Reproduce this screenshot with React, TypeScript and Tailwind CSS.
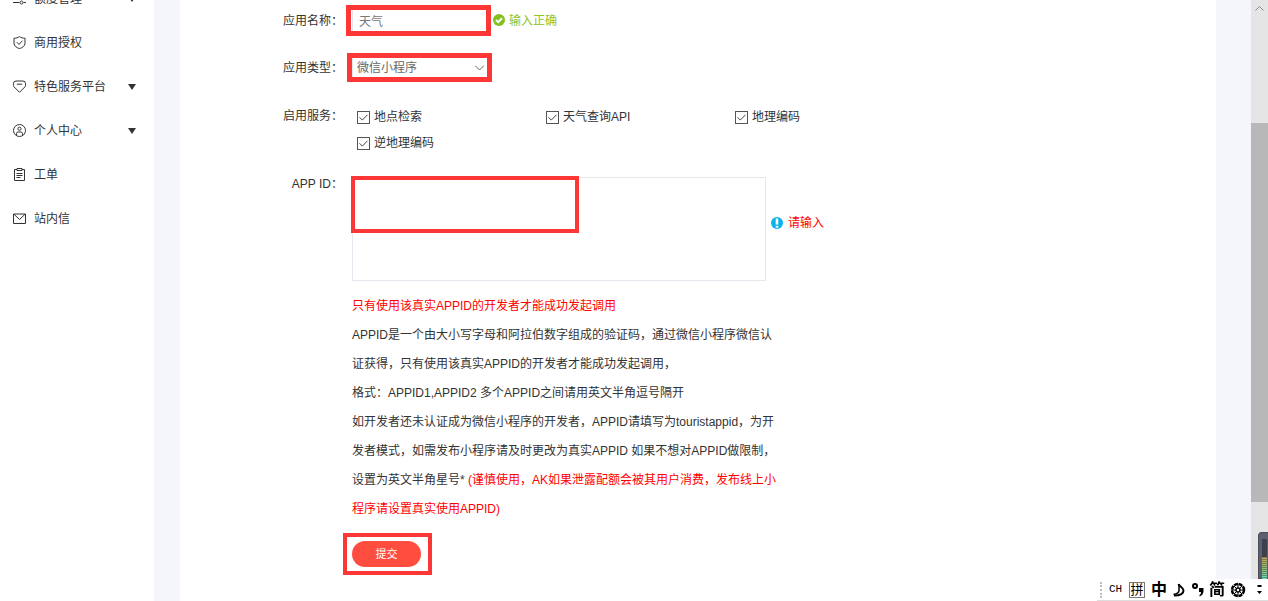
import { useState } from "react";

const services = ["地点检索", "天气查询API", "地理编码", "逆地理编码"];

const menu = [
  { name: "额度管理", icon: "quota", more: true },
  { name: "商用授权", icon: "shield", more: false },
  { name: "特色服务平台", icon: "gem", more: true },
  { name: "个人中心", icon: "user", more: true },
  { name: "工单", icon: "order", more: false },
  { name: "站内信", icon: "mail", more: false },
];

function MenuIcon({ name }: { name: string }) {
  return (
    <svg width="13" height="13" viewBox="0 0 13 13" fill="none" stroke="#333" strokeWidth="1">
      {name === "quota" && (
        <path d="M0 3h3M7 3h6M0 10.5h6.500M10.500 10.5h2.500M5 1.5a1.5 1.5 0 1 1 0 3a1.5 1.5 0 0 1 0-3zM8.500 9a1.5 1.5 0 1 1 0 3a1.5 1.5 0 0 1 0-3z" />
      )}
      {name === "shield" && (
        <path d="M6.5 .6C8 1.8 10 2.2 12 2.2v5C12 10 9.5 11.7 6.5 12.6C3.500 11.700 1 10 1 7.200v-5C3 2.200 5 1.800 6.500 .6zM3.800 6.200l2.200 2.200l3.500-3.700" />
      )}
      {name === "gem" && (
        <path d="M3 1h7a2.500 2.500 0 0 1 2.500 2.500v2c0 .6-.2 1-.6 1.400L6.500 12.300L1.100 6.900C.7 6.500.5 6.100.5 5.500v-2A2.500 2.500 0 0 1 3 1zM3.800 4.200h5.400" />
      )}
      {name === "user" && (
        <>
          <circle cx="6.5" cy="6.5" r="6" />
          <circle cx="6.5" cy="4.700" r="1.600" />
          <path d="M3.500 11.500V9.600a1.600 1.600 0 0 1 1.600-1.600h2.800a1.600 1.600 0 0 1 1.600 1.600v1.900" />
        </>
      )}
      {name === "order" && (
        <path d="M4 1.500H1.500v11h10v-11H9M4 .5h5v2H4zM3.500 5.500h6M3.500 7.500h6M3.500 9.500h4" />
      )}
      {name === "mail" && <path d="M.5 2h12v9.500H.5zM1 2.300l5.500 5.200L12 2.300" />}
    </svg>
  );
}

function Sidebar() {
  return (
    <nav className="w-[154px] shrink-0 bg-white">
      <ul className="-mt-6">
        {menu.map((item) => (
          <li key={item.name}>
            <a href="#" className="flex h-11 items-center pl-[13px] pr-[18px]">
              <MenuIcon name={item.icon} />
              <span className="ml-2 flex-1 pt-0.5">{item.name}</span>
              {item.more && (
                <svg width="8" height="8" viewBox="0 0 8 8" fill="#333">
                  <path d="M0 2h8L4 8z" />
                </svg>
              )}
            </a>
          </li>
        ))}
      </ul>
    </nav>
  );
}

function Scrollbar() {
  return (
    <div className="flex w-[17px] shrink-0 flex-col items-center bg-[#e5e5e5]">
      <svg width="9" height="17" viewBox="0 0 9 17" fill="none" stroke="#888">
        <path d="M.5 10.500l4-4l4 4" />
      </svg>
      <div className="grow-[106]" />
      <div className="w-full grow-[379] bg-[#b8b8b8]" />
      <div className="grow-[99]" />
    </div>
  );
}

function InputBar() {
  return (
    <div className="fixed right-0 bottom-0 flex h-[22px] w-[171px] items-center border-b border-[#ddd] bg-white pl-[3px] text-black">
      <div className="h-4 border-l-2 border-dotted border-[#bbb]" />
      <span className="ml-[7px] w-[14px] font-['Liberation_Mono'] text-[11px]">CH</span>
      <span className="ml-[6px] flex h-4 w-4 items-center justify-center border border-[#777] text-[13px]">拼</span>
      <span className="ml-[6px] text-[16px] font-bold">中</span>
      <svg className="ml-[5px]" width="14" height="16" viewBox="0 0 14 16" fill="none" stroke="#000" strokeWidth="2">
        <path d="M6.500 2C7 4 11.500 5.500 11.500 8.500C11.500 11.500 8 13.500 2 13.500" />
        <path d="M7 2v6.500C7 10.500 4.500 12 1.500 12.500" strokeWidth="1.500" />
      </svg>
      <svg className="ml-[5px]" width="14" height="16" viewBox="0 0 14 16">
        <circle cx="4" cy="4" r="2" fill="none" stroke="#000" strokeWidth="2" />
        <path d="M8 6h4.500v3c0 3-2 5-4 5.500v-1.500c1-.5 1.500-1.500 1.500-3H8z" />
      </svg>
      <span className="ml-[4px] text-[16px] font-bold">简</span>
      <svg className="ml-[5px]" width="16" height="16" viewBox="0 0 16 16" fill="none" stroke="#000">
        <circle cx="8" cy="8" r="6" strokeWidth="2.500" strokeDasharray="4 .7" />
        <circle cx="8" cy="8" r="2" strokeWidth="1.500" />
        <path d="M8 2v4M8 10v4M2 8h4M10 8h4M4 4l3 3M9 9l3 3M12 4L9 7M4 12l3-3" />
      </svg>
      <svg className="ml-[10px]" width="8" height="14" viewBox="0 0 8 14">
        <path d="M1.500 2h4v2h-4zM1 8h5l-2.500 3z" />
      </svg>
    </div>
  );
}

function VolumeMeter() {
  return (
    <div className="fixed right-0 bottom-[22px] h-[47px] w-[10px] rounded-tl border border-r-0 border-[#4a4d59] bg-[#5b5f6e] pt-[6px] pl-[3px]">
      <div className="h-[18px] w-[5px] bg-[#3e414c]" />
      <div className="h-[22px] w-[5px] bg-linear-to-b from-[#c9a94e] via-[#8fc06b] to-[#5fe0b0]">
        <svg width="5" height="22" viewBox="0 0 5 22" stroke="#3e414c" strokeOpacity=".5">
          <path d="M2.500 0v22" strokeWidth="5" strokeDasharray="1 1" />
        </svg>
      </div>
    </div>
  );
}

export default function App() {
  const [name, setName] = useState("天气");
  const [type, setType] = useState("mini");
  const [appId, setAppId] = useState("");

  return (
    <div className="flex h-screen overflow-hidden bg-[#f4f6fb] font-['Liberation_Sans','Noto_Sans_CJK_SC',sans-serif] text-[12px] text-[#333]">
      <Sidebar />

      <main className="mr-[35px] ml-[26px] flex-1 bg-white">
        <form
          className="flex flex-col gap-[21px] pt-[7px] whitespace-nowrap"
          onSubmit={(e) => e.preventDefault()}
        >
          <div className="flex items-center gap-[9px]">
            <label htmlFor="name" className="w-[163px] pt-0.5 text-right">应用名称：</label>
            <div className="relative">
              <input
                id="name"
                value={name}
                onChange={(e) => setName(e.target.value)}
                className="block h-[26px] w-[136px] border border-[#dfe6ec] px-1.5 text-[#777] outline-none"
              />
              <div className="pointer-events-none absolute -top-0.5 -right-[3px] -bottom-[3px] -left-1.5 border-5 border-[#fd3636]" />
            </div>
            <p className="-ml-1 flex items-center gap-1 text-[#8fc31f]">
              <svg width="12" height="12" viewBox="0 0 12 12">
                <circle cx="6" cy="6" r="6" fill="#84bf1d" />
                <path d="M3 6l2.200 2.200L9 4.300" fill="none" stroke="#fff" strokeWidth="2" />
              </svg>
              <span className="pt-0.5">输入正确</span>
            </p>
          </div>

          <div className="flex items-center gap-[9px]">
            <label htmlFor="type" className="w-[163px] pt-0.5 text-right">应用类型：</label>
            <div className="relative">
              <select
                id="type"
                value={type}
                onChange={(e) => setType(e.target.value)}
                className="block h-[26px] w-[136px] appearance-none border border-[#dfe6ec] bg-white px-1 pt-0.5 text-[#666] outline-none"
              >
                <option value="mini">微信小程序</option>
              </select>
              <svg className="pointer-events-none absolute top-[11px] right-1" width="9" height="6" viewBox="0 0 9 6" fill="none" stroke="#666">
                <path d="M0 .5l4.500 4.500L9 .5" />
              </svg>
              <div className="pointer-events-none absolute -top-px -right-1 -bottom-0.5 -left-[5px] border-5 border-[#fd3636]" />
            </div>
          </div>

          <fieldset className="flex gap-[9px] pt-[3px]">
            <legend className="float-left w-[163px] text-right leading-6">启用服务：</legend>
            <div className="grid grid-cols-[189px_189px_189px] pl-[5px]">
              {services.map((s) => (
                <label key={s} className="flex h-[26px] items-center gap-1">
                  <span className="relative">
                    <input
                      type="checkbox"
                      defaultChecked
                      className="peer block size-[13px] appearance-none border border-[#555] bg-white"
                    />
                    <svg className="pointer-events-none absolute inset-0 hidden peer-checked:block" width="13" height="13" viewBox="0 0 13 13" fill="none" stroke="#444">
                      <path d="M2.500 6.300l2.800 2.800l5.200-5.300" />
                    </svg>
                  </span>
                  {s}
                </label>
              ))}
            </div>
          </fieldset>

          <div className="flex gap-[9px]">
            <label htmlFor="appid" className="w-[163px] text-right leading-[14px]">APP ID：</label>
            <div>
              <div className="flex">
                <div className="relative">
                  <textarea
                    id="appid"
                    value={appId}
                    onChange={(e) => setAppId(e.target.value)}
                    className="block h-[104px] w-[414px] resize-none border border-[#e3e9ee] p-2 outline-none"
                  />
                  <div className="pointer-events-none absolute -top-px -left-px h-[57px] w-[228px] border-4 border-[#fd3636]" />
                </div>
                <p className="mt-9 ml-[5px] flex h-5 items-center gap-[5px] text-[#f00]">
                  <svg width="12" height="12" viewBox="0 0 12 12">
                    <circle cx="6" cy="6" r="6" fill="#0ab1ea" />
                    <path d="M4.700 1.500h2.600v6H4.700zM4.700 8.700h2.600v2H4.700z" fill="#fff" />
                  </svg>
                  请输入
                </p>
              </div>

              <p className="mt-[11px] leading-[29px]">
                <span className="text-[#f00]">只有使用该真实APPID的开发者才能成功发起调用</span>
                <br />
                APPID是一个由大小写字母和阿拉伯数字组成的验证码，通过微信小程序微信认
                <br />
                证获得，只有使用该真实APPID的开发者才能成功发起调用，
                <br />
                格式：APPID1,APPID2 多个APPID之间请用英文半角逗号隔开
                <br />
                如开发者还未认证成为微信小程序的开发者，APPID请填写为touristappid，为开
                <br />
                发者模式，如需发布小程序请及时更改为真实APPID 如果不想对APPID做限制，
                <br />
                设置为英文半角星号*{" "}
                <span className="text-[#f00]">
                  (谨慎使用，AK如果泄露配额会被其用户消费，发布线上小
                  <br />
                  程序请设置真实使用APPID)
                </span>
              </p>

              <div className="relative mt-[17px] w-[69px]">
                <button type="submit" className="block h-[26px] w-full rounded-full bg-[#ff4e40] text-[11px] text-white">
                  提交
                </button>
                <div className="pointer-events-none absolute -top-2 -right-[11px] -bottom-2 -left-[9px] border-4 border-[#fd3636]" />
              </div>
            </div>
          </div>
        </form>
      </main>

      <Scrollbar />
      <VolumeMeter />
      <InputBar />
    </div>
  );
}
